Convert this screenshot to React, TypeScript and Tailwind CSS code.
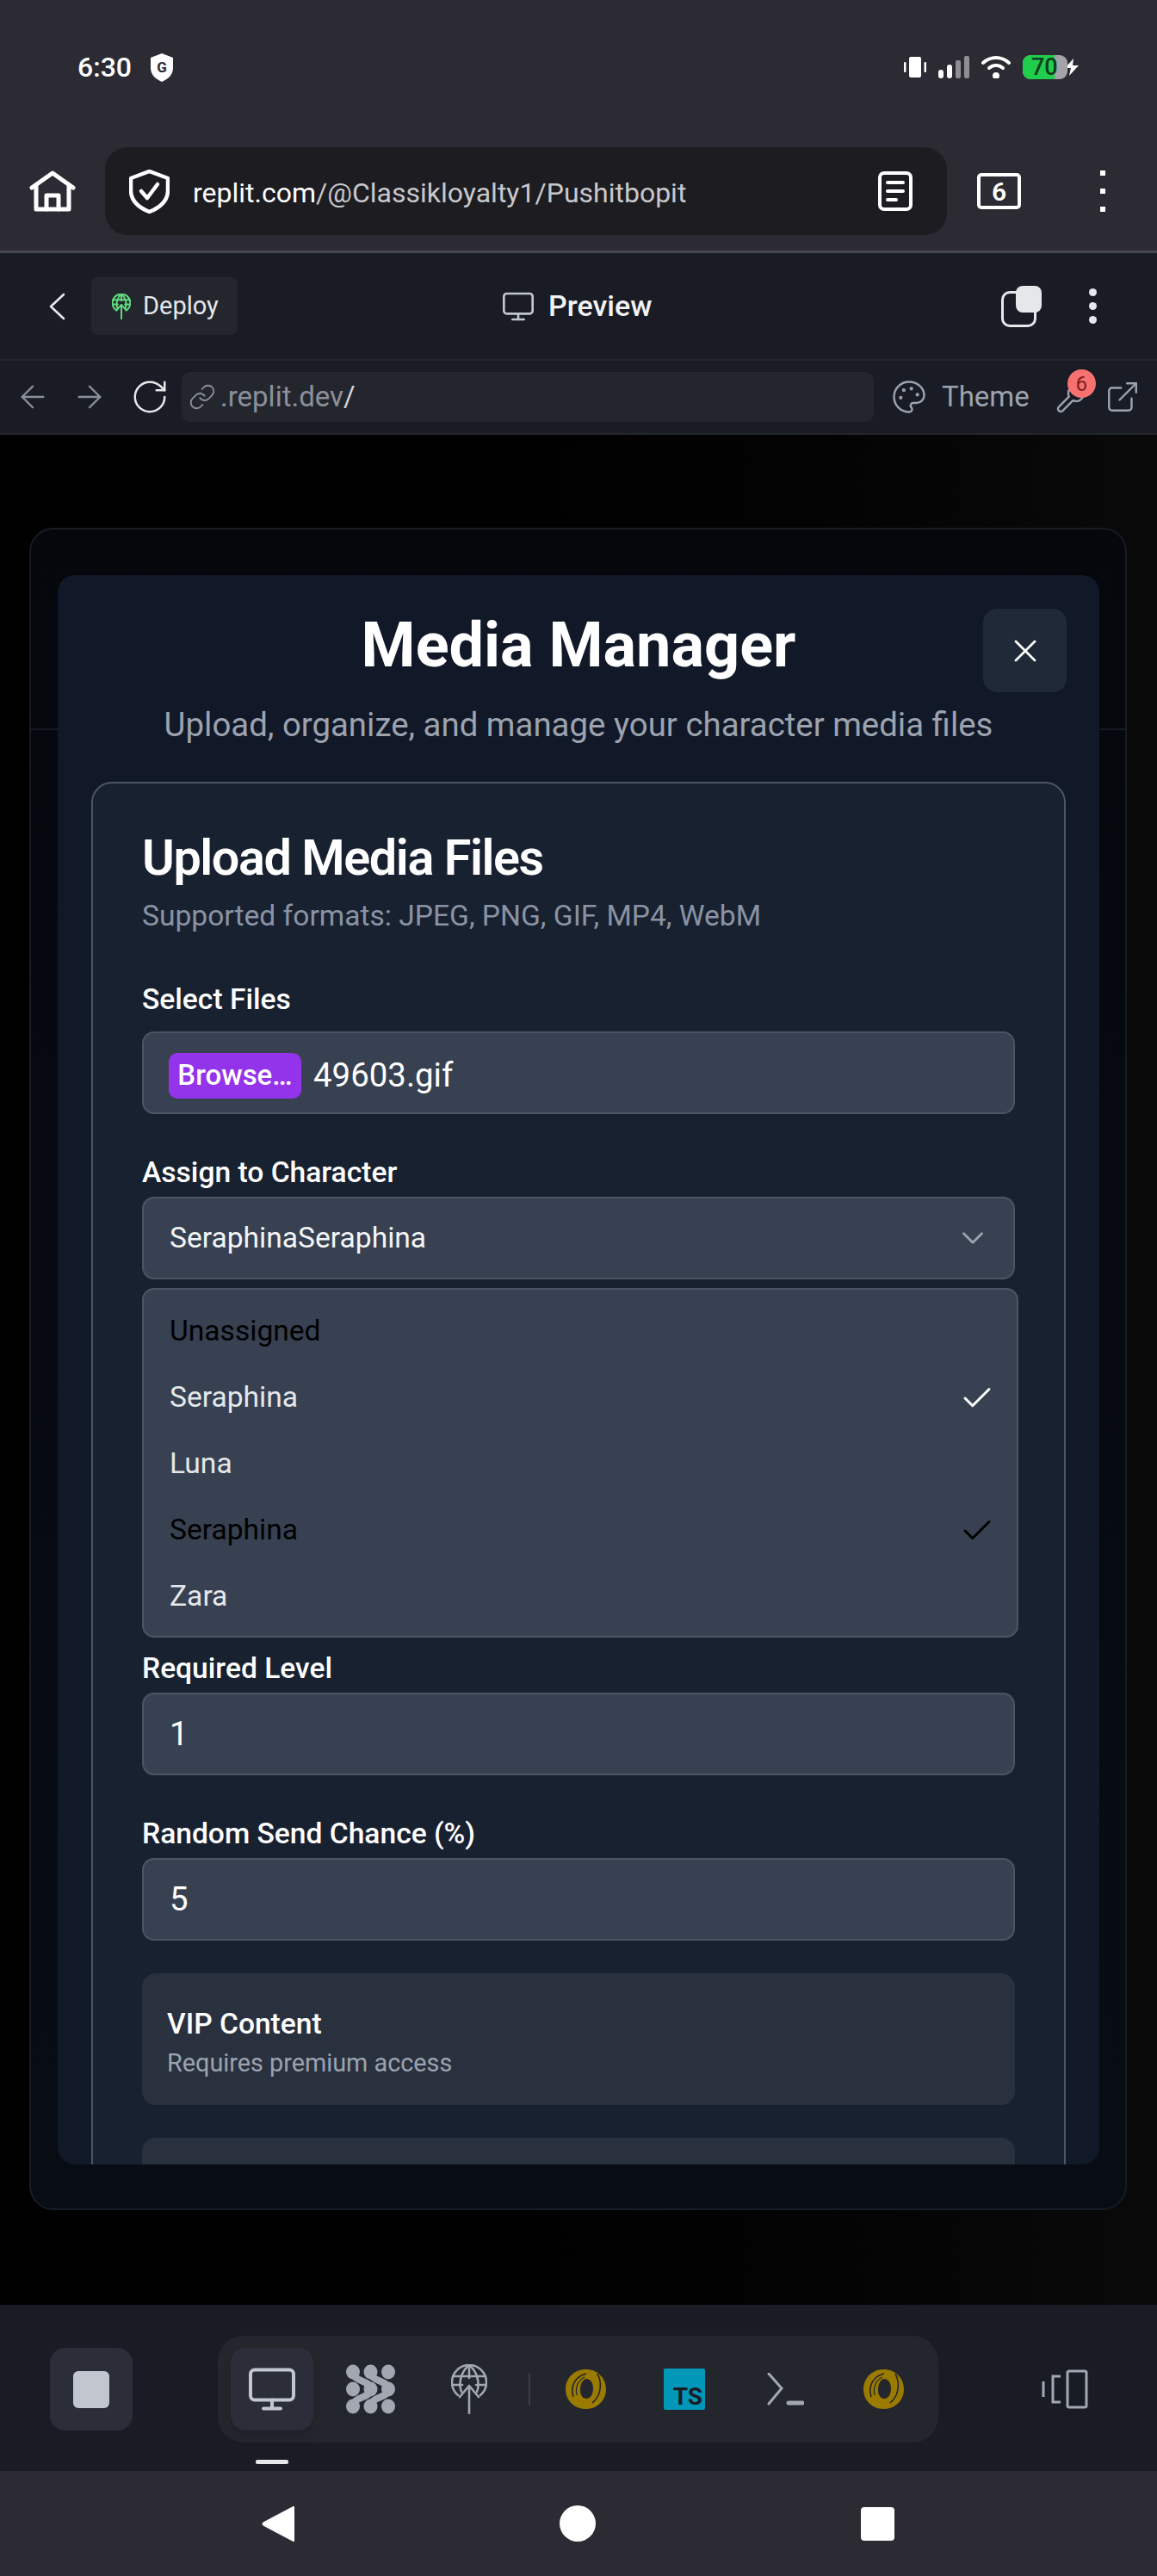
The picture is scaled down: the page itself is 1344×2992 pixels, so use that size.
import React from 'react';
import {
  ArrowLeft,
  ArrowRight,
  Check,
  ChevronDown,
  ExternalLink,
  Link as LinkIcon,
  Monitor,
  Palette,
  RotateCw,
  Wrench,
  X,
} from 'lucide-react';

function HomeIcon() {
  return (
    <svg width="54" height="48" viewBox="0 0 54 48" fill="none" stroke="white" strokeWidth="5" strokeLinejoin="round" strokeLinecap="round">
      <path d="M3 20 L27 3 L51 20 M8 17 V45 H46 V17" />
      <path d="M20 45 V29 H34 V45" />
    </svg>
  );
}

function GlobeUpload({ width, height, color, stroke = 2 }: { width: number; height: number; color: string; stroke?: number }) {
  return (
    <svg width={width} height={height} viewBox="0 0 42 58" fill="none" stroke={color} strokeWidth={stroke * (42 / width)} strokeLinecap="round" strokeLinejoin="round">
      <path d="M8 36 C3 32 1 27 1 21 C1 10 10 1 21 1 C32 1 41 10 41 21 C41 27 39 32 34 36" />
      <path d="M12 32 C8 22 12 8 21 1 C30 8 34 22 30 32" />
      <path d="M21 1 V16 M2 14 H40 M1 24 H13 M29 24 H41" />
      <path d="M21 57 V25 M10 38 L21 25 L32 38" />
    </svg>
  );
}

function NodesIcon() {
  return (
    <svg width="59" height="58" viewBox="0 0 59 58" fill="#a2a8b2">
      <g fill="none" stroke="#a2a8b2" strokeWidth="8">
        <path d="M9 9 C9 21 29.5 18 29.5 29 C29.5 40 9 37 9 49" />
        <path d="M29.5 9 C29.5 21 50 18 50 29 C50 40 29.5 37 29.5 49" />
      </g>
      <ellipse cx="9" cy="9" rx="8" ry="8.5" />
      <ellipse cx="29.5" cy="9" rx="8" ry="8.5" />
      <ellipse cx="50" cy="9" rx="8" ry="8.5" />
      <ellipse cx="9" cy="29" rx="8" ry="8.5" />
      <ellipse cx="29.5" cy="29" rx="8" ry="8.5" />
      <ellipse cx="50" cy="29" rx="8" ry="8.5" />
      <ellipse cx="9" cy="49" rx="8" ry="8.5" />
      <ellipse cx="29.5" cy="49" rx="8" ry="8.5" />
      <ellipse cx="50" cy="49" rx="8" ry="8.5" />
    </svg>
  );
}

function SpiralIcon() {
  return (
    <svg width="47" height="46" viewBox="0 0 47 46">
      <path fillRule="evenodd" fill="#9a7b00" d="M23.5 0 C37 0 47 10 47 23 C47 36 37 46 23.5 46 C10 46 0 36 0 23 C0 10 10 0 23.5 0 Z M24 11 C19 12 17 18 17 24 C17 30 20 34 24 34 C29 34 32 29 32 22 C32 16 29 11 24 11 Z" />
      <path d="M9 32 C5 20 11 8 24 5" fill="none" stroke="#24262e" strokeWidth="1.6" />
      <path d="M37 5 C43 16 41 31 31 39" fill="none" stroke="#24262e" strokeWidth="1.6" />
      <path d="M13 30 C11 22 14 13 22 9" fill="none" stroke="#24262e" strokeWidth="1.2" />
    </svg>
  );
}

function Field({ label, value }: { label: string; value: string }) {
  return (
    <>
      <div className="h-[40px] text-[33.6px] leading-[40px] font-medium text-white">{label}</div>
      <div className="mt-[8px] flex h-[96px] items-center rounded-[14px] border-2 border-[#4b5563] bg-[#374151] pl-[30px] text-[38.4px] text-white">
        {value}
      </div>
    </>
  );
}

function OptionRow({ name, dark, checked }: { name: string; dark?: boolean; checked?: boolean }) {
  return (
    <div className={`flex h-[77px] items-center justify-between pr-[25px] pl-[30px] text-[33.6px] ${dark ? 'text-black' : 'text-[#e5e7eb]'}`}>
      <span>{name}</span>
      {checked && <Check size={42} strokeWidth={1.7} className={dark ? 'text-black' : 'text-white'} />}
    </div>
  );
}

export default function App() {
  return (
    <div className="flex h-[2992px] w-[1344px] flex-col overflow-hidden bg-black font-['Roboto',sans-serif]">
      {/* Phone + browser chrome */}
      <div className="h-[294px] shrink-0 border-b-[3px] border-[#46454f] bg-[#2c2b34]">
        <div className="flex h-[171px] items-start justify-between pt-[61px] pr-[90px] pl-[90px]">
          <div className="flex items-center gap-[22px]">
            <span className="text-[32px] leading-[34px] font-medium text-white">6:30</span>
            <svg width="26" height="33" viewBox="0 0 26 33">
              <path d="M13 0 L26 5 V17 C26 25 20 30 13 33 C6 30 0 25 0 17 V5 Z" fill="white" />
              <text x="13" y="22" textAnchor="middle" fontSize="17" fontWeight="700" fontFamily="Roboto" fill="#2c2b34">G</text>
            </svg>
          </div>
          <div className="mt-[3px] flex items-center">
            <svg width="26" height="24" viewBox="0 0 26 24" fill="white" className="mr-[14px]">
              <rect x="6" y="0" width="14" height="24" rx="2" />
              <rect x="0" y="6" width="2.5" height="12" rx="1" />
              <rect x="23.5" y="6" width="2.5" height="12" rx="1" />
            </svg>
            <svg width="36" height="26" viewBox="0 0 36 26" className="mr-[14px]">
              <rect x="0" y="16" width="6" height="10" rx="3" fill="white" />
              <rect x="10" y="10" width="6" height="16" rx="3" fill="white" />
              <rect x="20" y="5" width="6" height="21" rx="2" fill="#8e8e93" />
              <rect x="30" y="0" width="6" height="26" rx="2" fill="#8e8e93" />
            </svg>
            <svg width="34" height="26" viewBox="0 0 34 26" fill="none" stroke="white" strokeWidth="4" strokeLinecap="round" className="mr-[14px]">
              <path d="M2 8 C11 0 23 0 32 8" />
              <path d="M9 14 C14 10 20 10 25 14" />
              <circle cx="17" cy="23" r="2" fill="white" />
            </svg>
            <div className="relative flex h-[28px] w-[52px] items-center rounded-[9px] bg-[#a3a3a8]">
              <div className="absolute inset-y-0 left-0 w-[37px] rounded-l-[9px] bg-[#1fce4d]" />
              <span className="relative ml-[10px] text-[27px] leading-[28px] font-medium text-[#0f3d1c]">70</span>
            </div>
            <svg width="18" height="20" viewBox="0 0 18 20" fill="white" className="-ml-[4px]">
              <path d="M11 0 L1 11 H8 L6 20 L17 8 H10 Z" />
            </svg>
          </div>
        </div>
        <div className="flex items-center pl-[34px]">
          <HomeIcon />
          <div className="ml-[34px] flex h-[102px] w-[978px] items-center rounded-[26px] bg-[#1d1c21] pr-[40px] pl-[28px]">
            <svg width="47" height="51" viewBox="0 0 47 51" fill="none" stroke="white" strokeWidth="4.5" strokeLinecap="round" strokeLinejoin="round">
              <path d="M23.5 2 L45 10 V24 C45 36 36 44 23.5 49 C11 44 2 36 2 24 V10 Z" />
              <path d="M14 25 L21 33 L33 17" />
            </svg>
            <div className="ml-[27px] flex-1 pt-[4px] text-[32px] whitespace-nowrap text-[#c8c8cc]">
              <span className="text-white">replit.com</span>/@Classikloyalty1/Pushitbopit
            </div>
            <svg width="40" height="46" viewBox="0 0 40 46" fill="none" stroke="white" strokeWidth="4" strokeLinecap="round">
              <rect x="2" y="2" width="36" height="42" rx="5" />
              <path d="M11 13 H29 M11 23 H29 M11 33 H21" />
            </svg>
          </div>
          <div className="ml-[35px] flex h-[42px] w-[51px] items-center justify-center rounded-[5px] border-[4px] border-white text-[30px] font-semibold text-white">6</div>
          <div className="ml-[92px] flex flex-col gap-[15px]">
            <div className="h-[6px] w-[6px] bg-white" />
            <div className="h-[6px] w-[6px] bg-white" />
            <div className="h-[6px] w-[6px] bg-white" />
          </div>
        </div>
      </div>

      {/* Replit header */}
      <div className="flex h-[125px] shrink-0 items-center border-b-2 border-[#24262e] bg-[#191c24] pl-[57px]">
        <svg width="19" height="32" viewBox="0 0 19 32" fill="none" stroke="#e5e7eb" strokeWidth="2.6" strokeLinecap="round" strokeLinejoin="round">
          <path d="M17 2 L2 16 L17 30" />
        </svg>
        <div className="ml-[30px] flex h-[67px] w-[170px] items-center rounded-[8px] bg-[#24262e] pl-[24px]">
          <GlobeUpload width={22} height={30} color="#5fdd7d" />
          <span className="ml-[14px] text-[29px] text-[#e5e7eb]">Deploy</span>
        </div>
        <Monitor size={40} strokeWidth={1.6} className="ml-[306px] text-[#c2c6ce]" />
        <span className="ml-[15px] text-[34px] font-medium text-[#f1f2f4]">Preview</span>
        <div className="relative ml-[406px] h-[48px] w-[47px]">
          <div className="absolute bottom-0 left-0 h-[42px] w-[41px] rounded-[10px] border-[3px] border-[#e5e7eb]" />
          <div className="absolute top-0 right-0 h-[31px] w-[30px] rounded-[8px] bg-[#e5e7eb]" />
        </div>
        <div className="ml-[55px] flex flex-col gap-[7px]">
          <div className="h-[9px] w-[9px] rounded-full bg-[#e5e7eb]" />
          <div className="h-[9px] w-[9px] rounded-full bg-[#e5e7eb]" />
          <div className="h-[9px] w-[9px] rounded-full bg-[#e5e7eb]" />
        </div>
      </div>
      <div className="flex h-[86px] shrink-0 items-center border-b-2 border-[#24262e] bg-[#191c24] pl-[17px]">
        <ArrowLeft size={42} strokeWidth={1.4} className="text-[#8b909b]" />
        <ArrowRight size={42} strokeWidth={1.4} className="ml-[24px] text-[#8b909b]" />
        <RotateCw size={46} strokeWidth={1.3} className="ml-[26px] text-[#e5e7eb]" />
        <div className="ml-[14px] flex h-[58px] w-[804px] items-center rounded-[10px] bg-[#24262e] pl-[8px] text-[33px] text-[#8b909b]">
          <LinkIcon size={32} strokeWidth={1.4} />
          <span className="ml-[5px]">
            .replit.dev<span className="text-[#d1d5db]">/</span>
          </span>
        </div>
        <Palette size={42} strokeWidth={1.4} className="ml-[20px] text-[#9ca3af]" />
        <span className="ml-[17px] text-[33px] text-[#9ca3af]">Theme</span>
        <div className="relative ml-[30px] h-[40px] w-[36px]">
          <Wrench size={36} strokeWidth={1.6} className="absolute bottom-0 left-0 text-[#9ca3af]" />
          <div className="absolute -top-[12px] -right-[11px] flex h-[33px] w-[33px] items-center justify-center rounded-full bg-[#f87171] text-[24px] text-[#7f1d1d]">6</div>
        </div>
        <ExternalLink size={42} strokeWidth={1.4} className="ml-[21px] text-[#9ca3af]" />
      </div>

      {/* Dialog area */}
      <div className="h-[2172px] shrink-0 bg-gradient-to-r from-black to-[#0a0a0a] pt-[108px] pl-[34px]">
        <div className="relative h-[1954px] w-[1275px] rounded-[28px] border-2 border-[#171c25] bg-gradient-to-b from-[#05070d] to-[#080d14] pt-[53px] pl-[31px]">
          <div className="absolute inset-x-0 top-[231px] h-[2px] bg-[#141a22]" />
          <div className="relative h-[1846px] w-[1210px] overflow-hidden rounded-[20px] bg-[#111827] pt-[42px]">
            <button className="absolute top-[39px] right-[38px] flex h-[97px] w-[97px] items-center justify-center rounded-[16px] bg-[#1f2937] text-white">
              <X size={44} strokeWidth={1.5} />
            </button>
            <h1 className="text-center text-[72px] leading-[80px] font-bold text-white">Media Manager</h1>
            <p className="mt-[28px] text-center text-[38.4px] leading-[48px] text-[#9ca3af]">
              Upload, organize, and manage your character media files
            </p>

            <div className="mx-[39px] mt-[42px] rounded-[24px] border-2 border-[#4b5563] bg-[#182130] pt-[55px] pr-[57px] pl-[57px]">
              <h2 className="text-[57.6px] leading-[64px] font-semibold tracking-tight text-white">Upload Media Files</h2>
              <p className="mt-[15px] text-[33.6px] leading-[40px] text-[#8a93a3]">Supported formats: JPEG, PNG, GIF, MP4, WebM</p>

              <div className="mt-[57px] h-[40px] text-[33.6px] leading-[40px] font-medium text-white">Select Files</div>
              <div className="mt-[17px] flex h-[96px] items-center rounded-[14px] border-2 border-[#4b5563] bg-[#374151] pt-[6px] pl-[29px]">
                <div className="flex h-[53px] w-[154px] items-center justify-center rounded-[10px] bg-[#9333ea] text-[33px] font-medium text-white">Browse…</div>
                <span className="ml-[14px] text-[38.4px] text-white">49603.gif</span>
              </div>

              <div className="mt-[48px] h-[40px] text-[33.6px] leading-[40px] font-medium text-white">Assign to Character</div>
              <div className="mt-[8px] flex h-[96px] items-center justify-between rounded-[14px] border-2 border-[#4b5563] bg-[#374151] pr-[26px] pl-[30px] text-[33.6px] text-[#f3f4f6]">
                <span>SeraphinaSeraphina</span>
                <ChevronDown size={42} strokeWidth={1.6} className="text-[#9ca3af]" />
              </div>

              <div className="mt-[10px] w-[1018px] rounded-[14px] border-2 border-[#4b5563] bg-[#374151] pt-[10px] pb-[7px]">
                <OptionRow name="Unassigned" dark />
                <OptionRow name="Seraphina" checked />
                <OptionRow name="Luna" />
                <OptionRow name="Seraphina" dark checked />
                <OptionRow name="Zara" />
              </div>

              <div className="mt-[16px]">
                <Field label="Required Level" value="1" />
              </div>
              <div className="mt-[48px]">
                <Field label="Random Send Chance (%)" value="5" />
              </div>

              <div className="mt-[38px] h-[153px] rounded-[16px] bg-[#29313f] pt-[37px] pl-[29px]">
                <div className="text-[33.6px] leading-[44px] font-medium text-white">VIP Content</div>
                <div className="mt-[5px] text-[28.8px] leading-[36px] text-[#9ca3af]">Requires premium access</div>
              </div>
              <div className="mt-[38px] h-[153px] rounded-[16px] bg-[#29313f]" />
            </div>
          </div>
        </div>
      </div>

      {/* Workspace toolbar */}
      <div className="relative flex h-[193px] shrink-0 items-start bg-[#191c24] pt-[36px] pl-[58px]">
        <div className="mt-[14px] flex h-[96px] w-[96px] items-center justify-center rounded-[18px] bg-[#2b2e38]">
          <div className="h-[43px] w-[42px] rounded-[6px] bg-[#c2c6ce]" />
        </div>
        <div className="ml-[99px] flex h-[124px] w-[837px] items-center rounded-[30px] bg-[#24262e] pl-[15px]">
          <div className="flex h-[96px] w-[96px] items-center justify-center rounded-[18px] bg-[#2b2e38] shadow-lg">
            <Monitor size={60} strokeWidth={1.6} className="text-[#c2c6ce]" />
          </div>
          <div className="ml-[37px]"><NodesIcon /></div>
          <div className="ml-[64px]"><GlobeUpload width={42} height={58} color="#a2a8b2" stroke={2.6} /></div>
          <div className="ml-[48px] h-[38px] w-[2px] bg-[#3a3d47]" />
          <div className="ml-[41px]"><SpiralIcon /></div>
          <div className="ml-[67px] flex h-[48px] w-[48px] items-end justify-end rounded-[2px] bg-[#0097b8] pr-[3px] text-[28px] leading-[30px] font-bold text-[#191c24]">TS</div>
          <svg width="43" height="38" viewBox="0 0 43 38" fill="none" stroke="#a2a8b2" strokeWidth="3" strokeLinecap="round" className="ml-[72px]">
            <path d="M2 1 L17 18 L2 36" />
            <path d="M25 35 H41" strokeWidth="5" />
          </svg>
          <div className="ml-[69px]"><SpiralIcon /></div>
        </div>
        <svg width="55" height="46" viewBox="0 0 55 46" fill="none" stroke="#a2a8b2" strokeWidth="3" className="mt-[39px] ml-[119px]">
          <rect x="31" y="2" width="22" height="42" rx="2" />
          <path d="M23 8 H14 V38 H23" />
          <path d="M3 14 V32" />
        </svg>
        <div className="absolute top-[180px] left-[297px] h-[5px] w-[38px] rounded-[2px] bg-[#e5e7eb]" />
      </div>

      {/* Android nav */}
      <div className="relative h-[122px] shrink-0 bg-[#2c2a33]">
        <svg width="39" height="43" viewBox="0 0 39 43" fill="white" className="absolute top-[40px] left-[304px]">
          <path d="M37 2 V41 L3 23 Q0 21.5 3 20 Z" stroke="white" strokeWidth="2" strokeLinejoin="round" />
        </svg>
        <div className="absolute top-[40px] left-[650px] h-[42px] w-[42px] rounded-full bg-white" />
        <div className="absolute top-[42px] left-[1000px] h-[39px] w-[39px] rounded-[4px] bg-white" />
      </div>
    </div>
  );
}
